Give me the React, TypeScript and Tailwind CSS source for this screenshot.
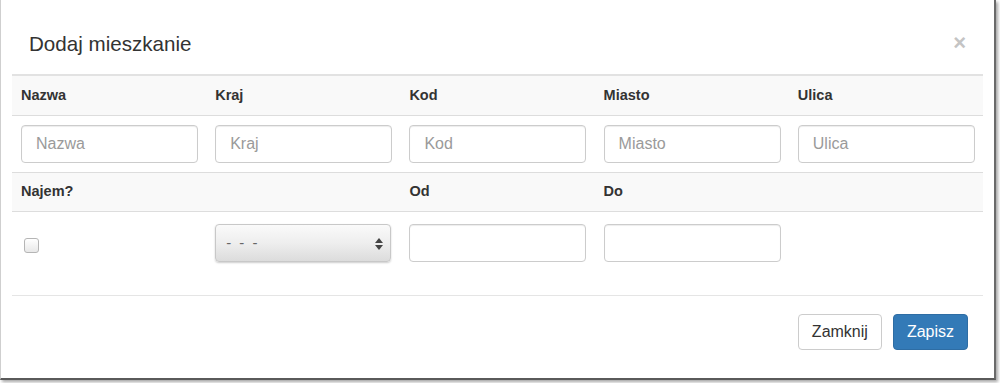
import React from "react";

const cols = ["Nazwa", "Kraj", "Kod", "Miasto", "Ulica"];

function TextInput({ placeholder }: { placeholder?: string }) {
  return (
    <input
      type="text"
      placeholder={placeholder}
      className="w-[177px] h-[38px] rounded-[4px] border border-[#cccccc] bg-white px-[14px] text-[16px] text-[#555] placeholder:text-[#9a9a9a] shadow-[inset_0_1px_1px_rgba(0,0,0,0.075)] outline-none"
    />
  );
}

function HeadCell({ children }: { children?: React.ReactNode }) {
  return <div className="px-[9px] text-[14.5px] font-bold text-[#333]">{children}</div>;
}

export default function App() {
  return (
    <div className="w-[1000px] h-[383px] bg-white font-['Liberation_Sans',Arial,sans-serif]">
      <div className="w-[996px] h-[380px] border-l border-l-[#cfcfcf] border-r-2 border-r-[#6a6a6a] border-b-2 border-b-[#5a5a5a] bg-white shadow-[2px_2px_3px_rgba(0,0,0,0.35)] flex flex-col">
        {/* header */}
        <div className="h-[74px] flex items-start justify-between pl-[28px] pr-[28px] pt-[30px]">
          <h4 className="text-[20.6px] leading-[27px] text-[#333]">Dodaj mieszkanie</h4>
          <span className="text-[22px] leading-[22px] font-bold text-[#c4c4c4] mt-[2px]">×</span>
        </div>

        {/* table */}
        <div className="mx-[11px]">
          <div className="grid grid-cols-5 h-[41px] items-center bg-[#f9f9f9] border-t-2 border-[#e2e2e2]">
            {cols.map((c) => (
              <HeadCell key={c}>{c}</HeadCell>
            ))}
          </div>
          <div className="grid grid-cols-5 h-[57px] items-center border-t border-[#dddddd]">
            {cols.map((c) => (
              <div key={c} className="px-[9px]">
                <TextInput placeholder={c} />
              </div>
            ))}
          </div>
          <div className="grid grid-cols-5 h-[39px] items-center bg-[#f9f9f9] border-t border-[#dddddd]">
            <HeadCell>Najem?</HeadCell>
            <HeadCell />
            <HeadCell>Od</HeadCell>
            <HeadCell>Do</HeadCell>
            <HeadCell />
          </div>
          <div className="grid grid-cols-5 h-[63px] items-center border-t border-[#dddddd]">
            <div className="px-[12px] pt-[4px]">
              <div className="w-[15px] h-[15px] rounded-[3px] border border-[#b5b5b5] bg-gradient-to-b from-white to-[#e8e8e8]" />
            </div>
            <div className="px-[9px]">
              <div className="relative w-[176px] h-[38px] rounded-[4px] border border-[#c8c8c8] bg-gradient-to-b from-[#fafafa] via-[#eeeeee] to-[#dcdcdc] shadow-[0_1px_2px_rgba(0,0,0,0.2)] flex items-center pl-[10px] text-[15px] text-[#666] tracking-[2px]">
                - - -
                <svg className="absolute right-[7px] top-[13px]" width="8" height="12" viewBox="0 0 8 12">
                  <path d="M4 0 L8 5 L0 5 Z" fill="#444" />
                  <path d="M0 7 L8 7 L4 12 Z" fill="#444" />
                </svg>
              </div>
            </div>
            <div className="px-[9px]">
              <TextInput />
            </div>
            <div className="px-[9px]">
              <TextInput />
            </div>
            <div />
          </div>
        </div>

        {/* footer */}
        <div className="mx-[11px] mt-[21px] border-t border-[#e5e5e5] flex justify-end gap-[11px] pt-[18px] pr-[15px]">
          <button className="h-[36px] px-[13px] rounded-[4px] border border-[#cccccc] bg-white text-[16px] text-[#333]">
            Zamknij
          </button>
          <button className="h-[36px] px-[13px] rounded-[4px] border border-[#2e6da4] bg-[#337ab7] text-[16px] text-white">
            Zapisz
          </button>
        </div>
      </div>
    </div>
  );
}
